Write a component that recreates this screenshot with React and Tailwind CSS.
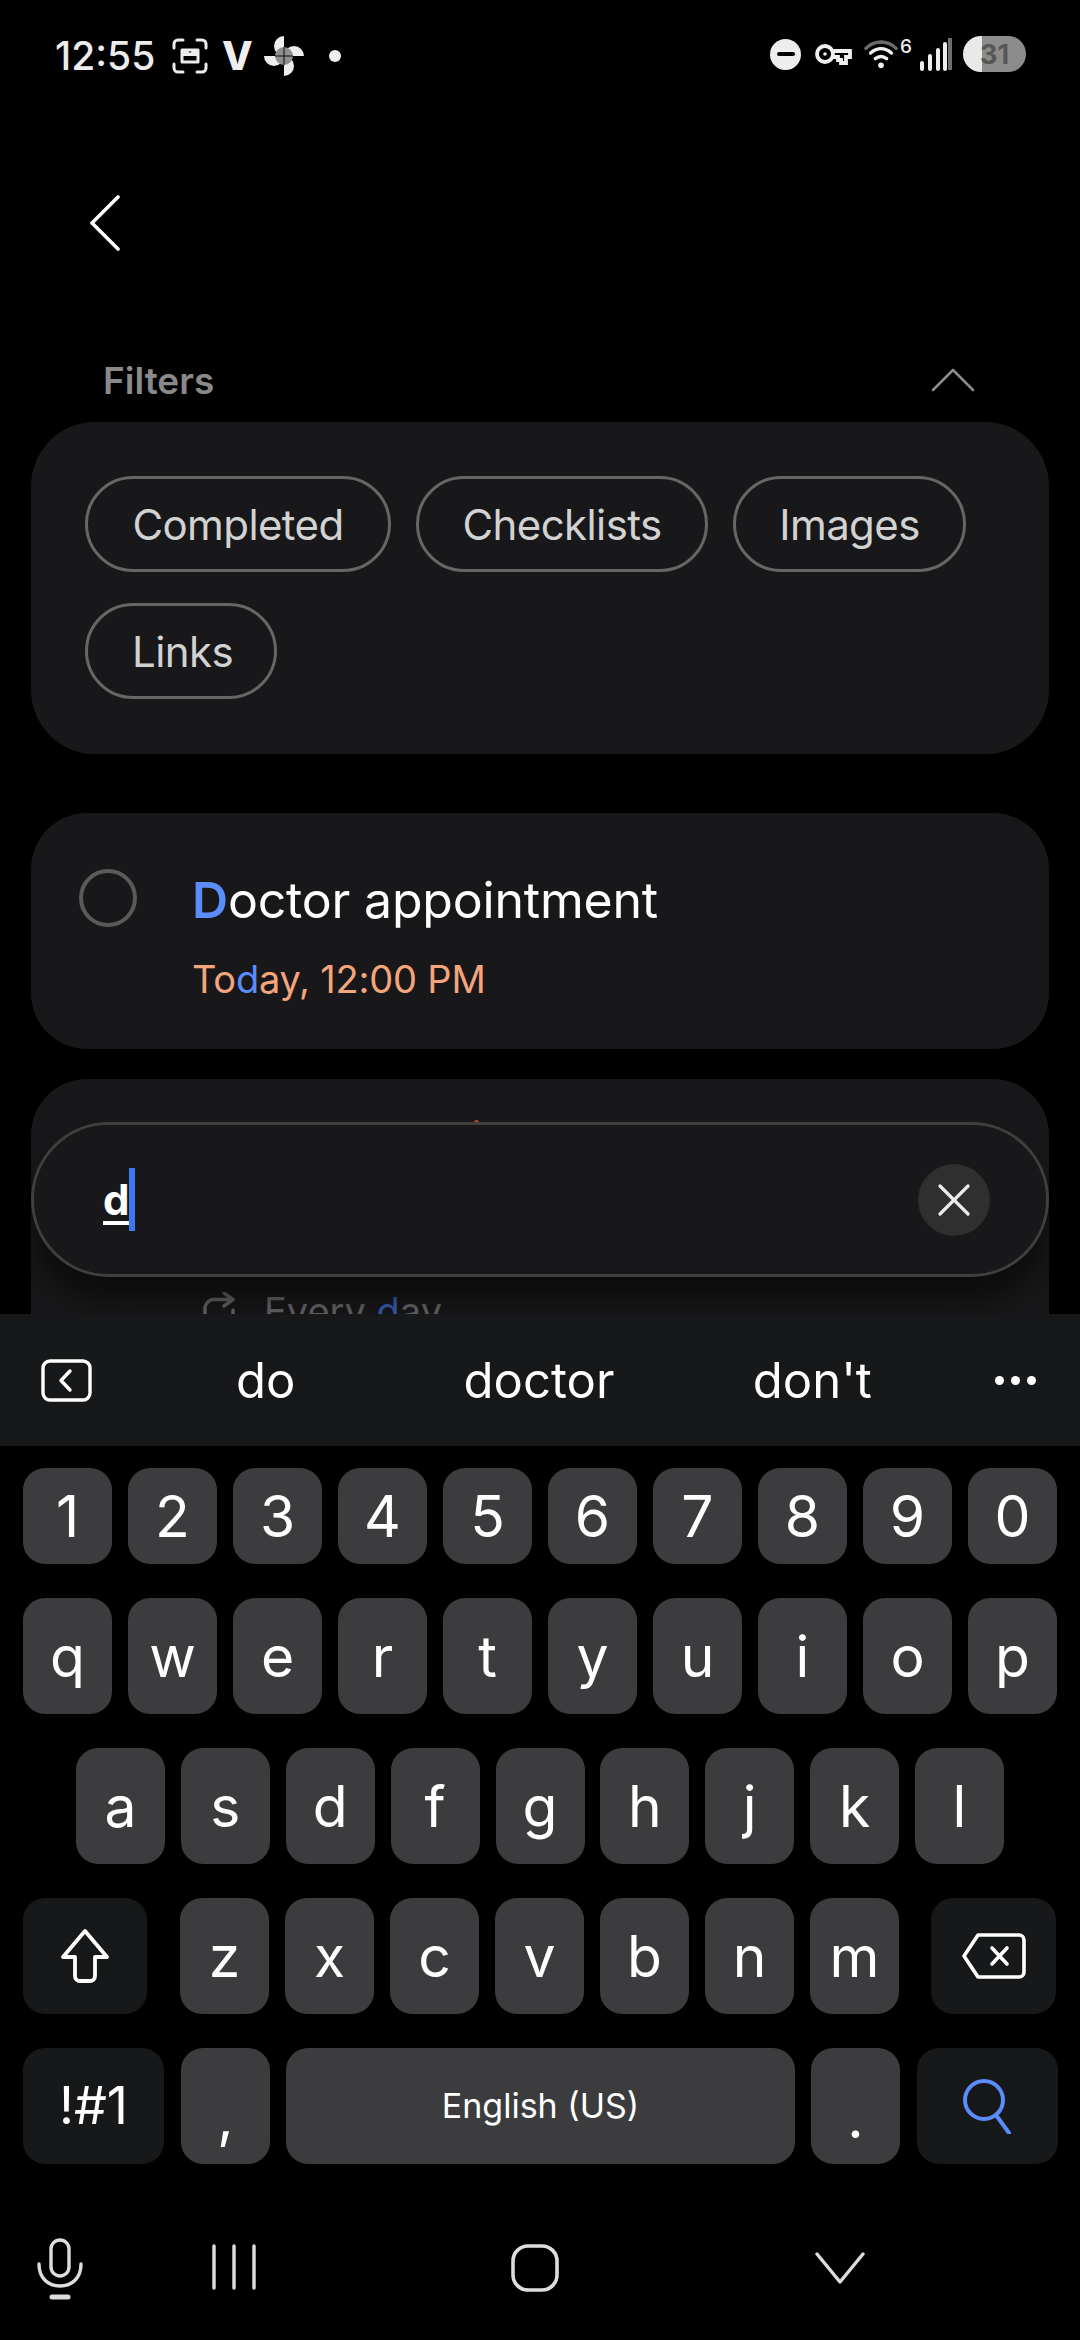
import { X } from 'lucide-react';

const numberRow = ['1', '2', '3', '4', '5', '6', '7', '8', '9', '0'];
const topRow = ['q', 'w', 'e', 'r', 't', 'y', 'u', 'i', 'o', 'p'];
const midRow = ['a', 's', 'd', 'f', 'g', 'h', 'j', 'k', 'l'];
const lowRow = ['z', 'x', 'c', 'v', 'b', 'n', 'm'];

function ScreenshotIcon() {
    return (
        <svg width="36" height="36" viewBox="0 0 36 36" fill="none" stroke="#ececec" strokeWidth="3" strokeLinecap="round">
            <path d="M2 10V6a4 4 0 0 1 4-4h5M25 2h5a4 4 0 0 1 4 4v4M34 26v4a4 4 0 0 1-4 4h-5M11 34H6a4 4 0 0 1-4-4v-4" />
            <path d="M10 12h16v12H10z" strokeLinejoin="round" />
            <path d="M10 12h5l3 3 3-3h5v6H10z" fill="#ececec" stroke="none" />
        </svg>
    );
}

function Pinwheel() {
    return (
        <svg width="40" height="40" viewBox="0 0 40 40">
            <path d="M20 20V0a10 10 0 0 0 0 20z" fill="#eeeeee" />
            <path d="M20 20h20a10 10 0 0 0-20 0z" fill="#eeeeee" />
            <path d="M20 20v20a10 10 0 0 0 0-20z" fill="#eeeeee" />
            <path d="M20 20H0a10 10 0 0 0 20 0z" fill="#eeeeee" />
            <path d="M20 20V11a9 9 0 0 0-9 9zM20 20h9a9 9 0 0 0-9-9zM20 20v9a9 9 0 0 0 9-9zM20 20h-9a9 9 0 0 0 9 9z" fill="#8f8f8f" />
            <path d="M20 11v18M11 20h18" stroke="#000000" strokeWidth="0.9" />
        </svg>
    );
}

function KeyIcon() {
    return (
        <svg width="37" height="22" viewBox="0 0 37 22" fill="none" stroke="#f0f0f0" strokeWidth="3.8">
            <circle cx="10" cy="11" r="8" />
            <circle cx="10" cy="11" r="1.8" fill="#f0f0f0" stroke="none" />
            <path d="M18 8h17v6h-4v6h-5v-3h-3v-3h-5" />
        </svg>
    );
}

function WifiIcon() {
    return (
        <svg width="34" height="30" viewBox="0 0 36 30" fill="none" strokeWidth="3.6" strokeLinecap="round">
            <path d="M2 9C11 0 25 0 34 9" stroke="#6b6b6b" />
            <path d="M7 14c7-6 15-6 22 0" stroke="#f0f0f0" />
            <path d="M12 20c4-3 8-3 12 0" stroke="#f0f0f0" />
            <circle cx="18" cy="27" r="3" fill="#f0f0f0" />
        </svg>
    );
}

function SignalIcon() {
    return (
        <svg width="32" height="34" viewBox="0 0 32 34" strokeLinecap="round" strokeWidth="4" fill="none">
            <path d="M2 26v6M10 19v13M18 13v19M25 7v25" stroke="#eeeeee" />
            <path d="M30 1v32" stroke="#6e6e6e" strokeLinecap="butt" />
        </svg>
    );
}

function StatusBar() {
    return (
        <div className="flex h-[110px] items-start justify-between pl-[55px] pr-[54px] pt-[36px]">
            <div className="flex items-center">
                <span className="w-[117px] text-[39px] font-medium leading-[40px] text-[#ececec]">12:55</span>
                <ScreenshotIcon />
                <span className="ml-[14px] w-[42px] text-[40px] font-extrabold leading-[40px] text-[#eeeeee]">V</span>
                <Pinwheel />
                <span className="ml-[25px] h-[12px] w-[12px] rounded-full bg-[#eeeeee]" />
            </div>
            <div className="flex items-center">
                <div className="flex h-[31px] w-[31px] items-center justify-center rounded-full bg-[#eeeeee]">
                    <div className="h-[4px] w-[18px] rounded-full bg-black" />
                </div>
                <div className="ml-[14px]">
                    <KeyIcon />
                </div>
                <div className="ml-[12px]">
                    <WifiIcon />
                </div>
                <span className="mb-[14px] ml-[2px] w-[13px] text-[19px] font-medium leading-[18px] text-[#eeeeee]">6</span>
                <div className="ml-[7px]">
                    <SignalIcon />
                </div>
                <div className="ml-[11px] flex h-[36px] w-[63px] items-center justify-center overflow-hidden rounded-full bg-[linear-gradient(90deg,#e9e9e9_0,#e9e9e9_19px,#8c8c8c_19px)] text-[27px] font-bold leading-none text-[#565656]">
                    31
                </div>
            </div>
        </div>
    );
}

function FilterChip({ label, className }) {
    return (
        <div className={`flex h-[96px] items-center justify-center rounded-full border-[3px] border-[#666666] pt-[2px] text-[42px] leading-none tracking-[-0.6px] text-[#d2d2d2] ${className}`}>
            {label}
        </div>
    );
}

function TaskPanel() {
    return (
        <div className="relative h-[1314px] overflow-hidden">
            <StatusBar />
            {/* back */}
            <div className="ml-[89px] mt-[85px] h-[56px]">
                <svg width="32" height="56" viewBox="0 0 32 56" fill="none" stroke="#ffffff" strokeWidth="3.6" strokeLinecap="round" strokeLinejoin="round">
                    <path d="M29 2L3 28l26 26" />
                </svg>
            </div>

            <div className="ml-[103px] mr-[105px] mt-[110px] flex h-[38px] items-center justify-between">
                <span className="text-[37px] font-semibold leading-none text-[#8a8a8a]">Filters</span>
                <svg width="44" height="24" viewBox="0 0 44 24" fill="none" stroke="#8a8a8a" strokeWidth="2.6" strokeLinecap="round" strokeLinejoin="round">
                    <path d="M2 22L22 2l20 20" />
                </svg>
            </div>

            <div className="mx-[31px] mt-[23px] flex h-[332px] flex-wrap content-start gap-x-[25px] gap-y-[31px] rounded-[64px] bg-[#18181a] pl-[54px] pr-[40px] pt-[54px]">
                <FilterChip label="Completed" className="w-[306px]" />
                <FilterChip label="Checklists" className="w-[292px]" />
                <FilterChip label="Images" className="w-[233px]" />
                <FilterChip label="Links" className="w-[192px] pl-[3px]" />
            </div>

            <div className="mx-[31px] mt-[59px] flex h-[236px] rounded-[56px] bg-[#18181a] pl-[48px]">
                <div className="mt-[56px] h-[58px] w-[58px] rounded-full border-[4px] border-[#5a5a5a]" />
                <div className="ml-[55px] mt-[57px]">
                    <div className="text-[50px] leading-[60px] tracking-[-0.2px] text-white">
                        <span className="font-semibold text-[#5a8dfb]">D</span>octor appointment
                    </div>
                    <div className="mt-[26px] text-[38px] leading-[46px] tracking-[-0.2px] text-[#f4a57c]">
                        To<span className="text-[#5a8dfb]">d</span>ay, 12:00 PM
                    </div>
                </div>
            </div>

            <div className="mx-[31px] mt-[30px] h-[260px] rounded-t-[56px] bg-[#18181a] pl-[171px] pt-[209px]">
                <div className="flex items-start">
                    <svg className="mt-[4px]" width="34" height="44" viewBox="0 0 34 44" fill="none" stroke="#666666" strokeWidth="3.4" strokeLinecap="round" strokeLinejoin="round">
                        <path d="M22 1l9 6.500-9 6.500" />
                        <path d="M30 7.500H12a9 9 0 0 0-9 9V30" />
                        <path d="M31 18v3" />
                    </svg>
                    <span className="ml-[28px] text-[38px] leading-[46px] text-[#666666]">
                        Every <span className="text-[#3a5fb0]">d</span>ay
                    </span>
                </div>
            </div>

            {/* search field floats over the list */}
            <div className="absolute left-[31px] right-[31px] top-[1122px] flex h-[155px] items-center rounded-full border-[3px] border-[#3f3f3f] bg-[#18181a] pl-[69px] pr-[56px] shadow-[0_24px_30px_rgba(0,0,0,0.5)]">
                <span className="text-[42px] font-bold leading-[52px] text-white underline underline-offset-[6px]">d</span>
                <span className="h-[63px] w-[6px] bg-[#3a78f2]" />
                <div className="ml-auto flex h-[72px] w-[72px] items-center justify-center rounded-full bg-[#2f2f30]">
                    <X size={56} strokeWidth={1.4} color="#ececec" />
                </div>
            </div>
            {/* tip of a text hidden by the field */}
            <div className="absolute left-[474px] top-[1120px] h-[2px] w-[5px] rounded-t-full bg-[#a0482f]" />
        </div>
    );
}

function SuggestionStrip() {
    return (
        <div className="flex h-[132px] items-center bg-[#17181a]">
            <div className="ml-[41px] flex h-[43px] w-[51px] shrink-0 items-center justify-center">
                <svg width="51" height="43" viewBox="0 0 51 43" fill="none" stroke="#ffffff" strokeWidth="3.4" strokeLinecap="round" strokeLinejoin="round">
                    <rect x="2" y="2" width="47" height="39" rx="7" />
                    <path d="M29 12l-9 9.500 9 9.500" />
                </svg>
            </div>
            <div className="ml-[37px] grid w-[820px] shrink-0 grid-cols-3 text-center text-[49px] leading-none text-white">
                <span>do</span>
                <span>doctor</span>
                <span>don't</span>
            </div>
            <div className="ml-[46px] flex gap-[7px]">
                <span className="h-[9px] w-[9px] rounded-full bg-white" />
                <span className="h-[9px] w-[9px] rounded-full bg-white" />
                <span className="h-[9px] w-[9px] rounded-full bg-white" />
            </div>
        </div>
    );
}

function Key({ children, className = '' }) {
    return (
        <div className={`flex w-[89px] shrink-0 items-center justify-center rounded-[22px] bg-[#3c3c3e] text-[57px] leading-none text-white ${className}`}>
            {children}
        </div>
    );
}

function SideKey({ children, className = '' }) {
    return (
        <div className={`flex shrink-0 items-center justify-center rounded-[22px] bg-[#17181a] text-white ${className}`}>
            {children}
        </div>
    );
}

function Keyboard() {
    return (
        <div className="flex flex-col px-[23px] pt-[22px]">
            <div className="flex h-[96px] justify-between">
                {numberRow.map((k) => (
                    <Key key={k}>{k}</Key>
                ))}
            </div>
            <div className="mt-[34px] flex h-[116px] justify-between">
                {topRow.map((k) => (
                    <Key key={k}>{k}</Key>
                ))}
            </div>
            <div className="mt-[34px] flex h-[116px] justify-between px-[53px]">
                {midRow.map((k) => (
                    <Key key={k}>{k}</Key>
                ))}
            </div>
            <div className="mt-[34px] flex h-[116px] items-stretch">
                <SideKey className="w-[124px]">
                    <svg width="54" height="56" viewBox="0 0 54 56" fill="none" stroke="#ffffff" strokeWidth="3.8" strokeLinejoin="round">
                        <path d="M27 3L5 29h12v19a5 5 0 0 0 5 5h10a5 5 0 0 0 5-5V29h12z" />
                    </svg>
                </SideKey>
                <div className="ml-[33px] flex gap-[16px]">
                    {lowRow.map((k) => (
                        <Key key={k}>{k}</Key>
                    ))}
                </div>
                <SideKey className="ml-[32px] w-[125px]">
                    <svg width="66" height="48" viewBox="0 0 66 48" fill="none" stroke="#ffffff" strokeWidth="3.6" strokeLinejoin="round" strokeLinecap="round">
                        <path d="M17 3h41a5 5 0 0 1 5 5v32a5 5 0 0 1-5 5H17L3 24z" />
                        <path d="M31 16l15 16M46 16L31 32" />
                    </svg>
                </SideKey>
            </div>
            <div className="mt-[34px] flex h-[116px] items-stretch">
                <SideKey className="w-[141px] text-[52px] leading-none">!#1</SideKey>
                <Key className="ml-[17px] items-end pb-[19px]">,</Key>
                <Key className="ml-[16px] !w-[509px] !text-[34px]">English (US)</Key>
                <Key className="ml-[16px] items-end pb-[18px]">.</Key>
                <SideKey className="ml-[17px] w-[141px]">
                    <svg width="54" height="56" viewBox="0 0 54 56" fill="none" stroke="#5a8dfb" strokeWidth="4" strokeLinecap="round">
                        <circle cx="23" cy="22" r="19" />
                        <path d="M35 37l13 18" />
                    </svg>
                </SideKey>
            </div>
        </div>
    );
}

function NavBar() {
    return (
        <div className="relative flex h-[176px] justify-center">
            <div className="absolute left-[37px] top-[74px]">
                <svg width="46" height="62" viewBox="0 0 46 62" fill="none" stroke="#dddddd" strokeWidth="3.4" strokeLinecap="round">
                    <rect x="14" y="2" width="18" height="36" rx="9" />
                    <path d="M2 26c0 14 9 22 21 22s21-8 21-22" />
                    <path d="M15 59h16" strokeWidth="5" />
                </svg>
            </div>
            <div className="ml-[-1px] flex w-[650px] items-start justify-between pt-[80px]">
                <svg className="-ml-[3px]" width="44" height="46" viewBox="0 0 44 46" fill="none" stroke="#dddddd" strokeWidth="3.4" strokeLinecap="round">
                    <path d="M2 2v42M22 2v42M42 2v42" />
                </svg>
                <svg width="48" height="48" viewBox="0 0 48 48" fill="none" stroke="#dddddd" strokeWidth="3.6">
                    <rect x="2" y="2" width="44" height="44" rx="15" />
                </svg>
                <svg className="mt-[8px]" width="50" height="32" viewBox="0 0 50 32" fill="none" stroke="#dddddd" strokeWidth="3.4" strokeLinecap="round" strokeLinejoin="round">
                    <path d="M2 2l23 28L48 2" />
                </svg>
            </div>
        </div>
    );
}

export default function App() {
    return (
        <div className="h-[2340px] w-[1080px] overflow-hidden bg-black font-['Inter',sans-serif]">
            <TaskPanel />
            <SuggestionStrip />
            <Keyboard />
            <NavBar />
        </div>
    );
}
